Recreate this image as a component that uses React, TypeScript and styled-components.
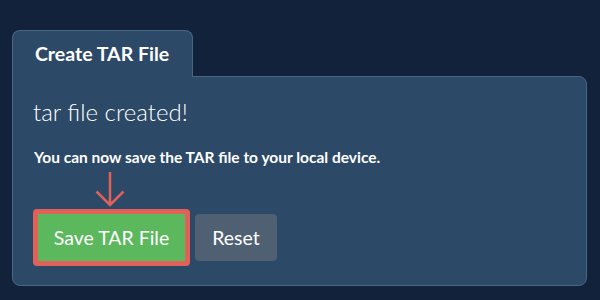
import * as React from "react"
import styled, { createGlobalStyle } from "styled-components";

const GlobalStyle = createGlobalStyle`
  html, body {
    margin: 0;
    padding: 0;
    background: #11223a;
  }
  body {
    font-family: Lato, "Open Sans", sans-serif;
    color: #ffffff;
  }
`

export const Page = styled.div`
  width: 600px;
  height: 300px;
  box-sizing: border-box;
  padding: 30px 13px 0 12px;
`

export const Tab = styled.div`
  width: 181px;
  height: 47px;
  box-sizing: border-box;
  background: #2d4968;
  border: 1px solid #4a6685;
  border-bottom: none;
  border-radius: 8px 8px 0 0;
  padding: 11px 0 0 22px;
  font-size: 19.5px;
  font-weight: bold;
  position: relative;
  z-index: 1;
  margin-bottom: -1px;
`

export const Panel = styled.div`
  height: 210px;
  box-sizing: border-box;
  background: #2d4968;
  border: 1px solid #4a6685;
  border-radius: 0 8px 8px 8px;
  padding: 20px 0 0 20px;
`

export const Heading = styled.h2`
  margin: 0;
  font-size: 24px;
  font-weight: 300;
  line-height: 30px;
`

export const Message = styled.p`
  margin: 21px 0 0 1px;
  font-size: 15.5px;
  font-weight: bold;
  line-height: 18px;
`

export const Actions = styled.div`
  display: flex;
  align-items: flex-start;
  gap: 5px;
  margin-top: 43px;
`

export const Highlight = styled.div`
  position: relative;
  border: 5px solid #e0605a;
  border-radius: 4px;
  display: flex;
`

export const Arrow = styled.svg`
  position: absolute;
  left: 57px;
  top: -43px;
`

export const Button = styled.button<{ $variant: "success" | "muted" }>`
  height: 47px;
  border: none;
  border-radius: ${p => (p.$variant === "success" ? "0" : "4px")};
  background: ${p => (p.$variant === "success" ? "#5cb85c" : "#4f6073")};
  color: #ffffff;
  font-family: Lato, "Open Sans", sans-serif;
  font-size: 19.5px;
  padding: 0;
  margin-top: ${p => (p.$variant === "success" ? "0" : "5px")};
  width: ${p => (p.$variant === "success" ? "147px" : "82px")};
  cursor: pointer;
`

const App = () => {
    return (
        <Page>
            <GlobalStyle />
            <Tab>Create TAR File</Tab>
            <Panel>
                <Heading>tar file created!</Heading>
                <Message>You can now save the TAR file to your local device.</Message>
                <Actions>
                    <Highlight>
                        <Arrow width="30" height="38" viewBox="0 0 30 38">
                            <path d="M15 1 V34 M1.5 20.5 L15 34 L28.5 20.5" stroke="#e0605a" strokeWidth="2.5" fill="none" />
                        </Arrow>
                        <Button $variant="success">Save TAR File</Button>
                    </Highlight>
                    <Button $variant="muted">Reset</Button>
                </Actions>
            </Panel>
        </Page>
    )
}

export default App
